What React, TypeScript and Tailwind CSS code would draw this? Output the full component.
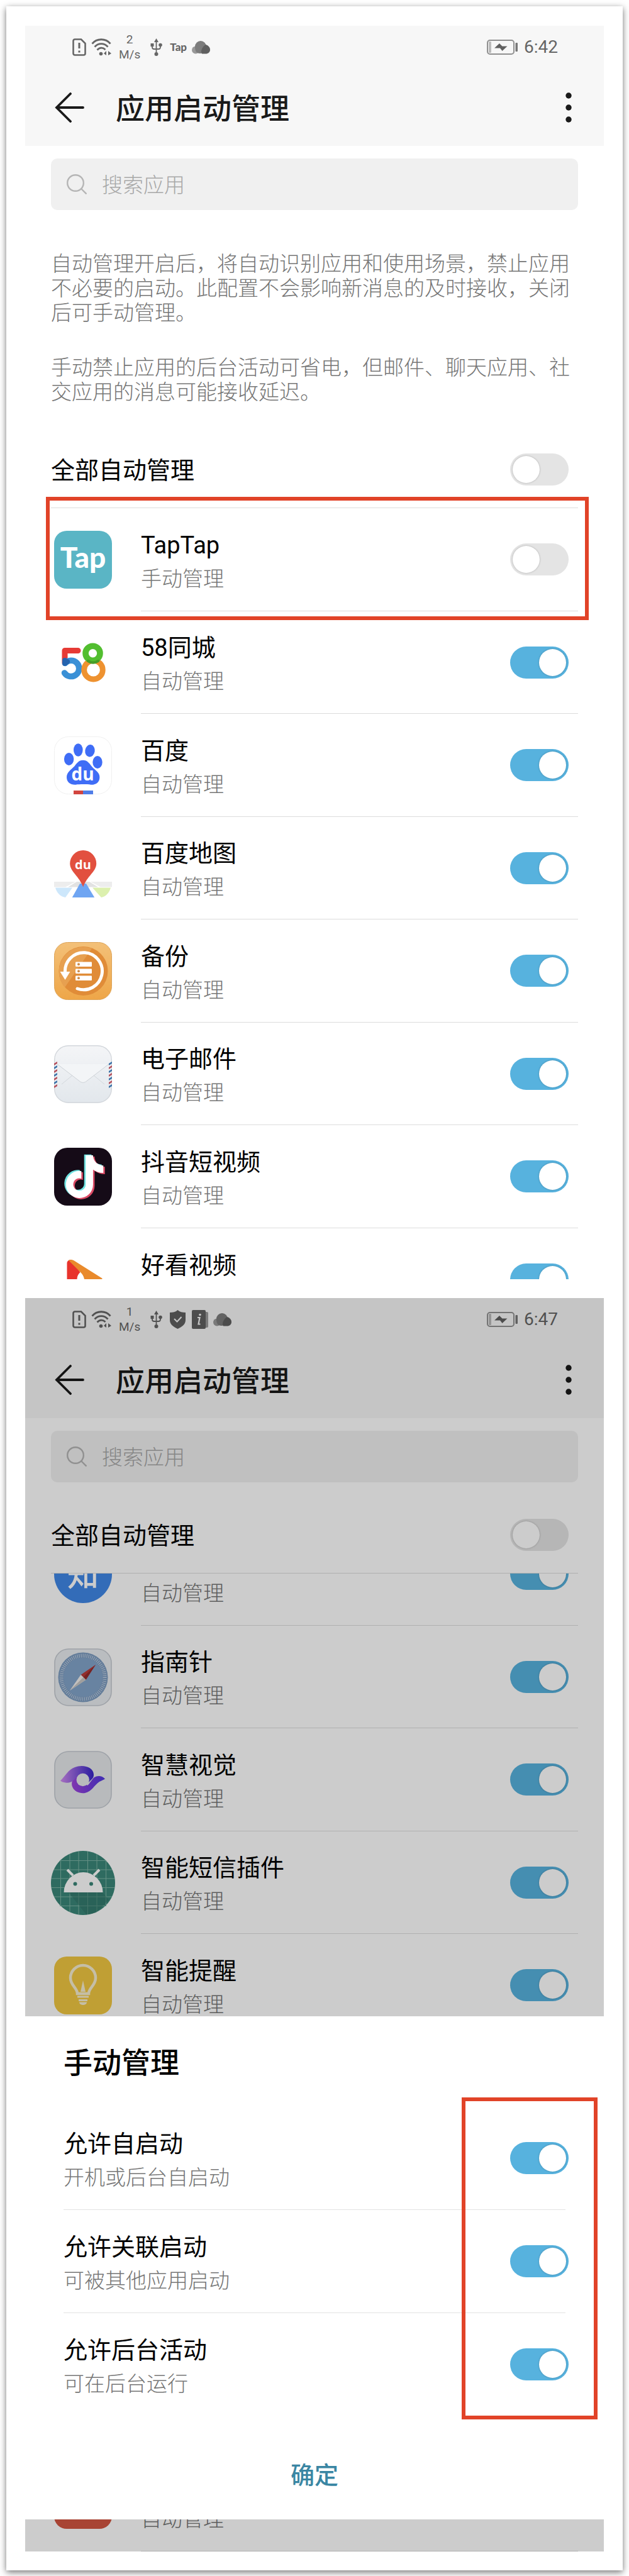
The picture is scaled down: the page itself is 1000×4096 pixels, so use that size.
import { useState } from "react";
import type { ReactNode } from "react";
import { FaTiktok } from "react-icons/fa";

// ---------- status bar icons ----------

const SimIcon = () => (
  <svg width="22" height="28" viewBox="0 0 22 28" fill="none" stroke="#666" strokeWidth="2.6">
    <path d="M4 1.5h10L20.5 8v16a2.5 2.5 0 0 1-2.5 2.5H4A2.5 2.5 0 0 1 1.5 24V4A2.5 2.5 0 0 1 4 1.5z" />
    <path d="M11 7v9M11 19.5v3" strokeWidth="3" />
  </svg>
);

const WifiIcon = () => (
  <svg width="32" height="28" viewBox="0 0 32 28" fill="none" stroke="#666" strokeWidth="2.8">
    <path d="M1.5 8.500C9-.5 23-.5 30.500 8.500" />
    <path d="M5.500 13.500c6-6.500 15-6.500 21 0" />
    <path d="M9.500 18.500c4-4.300 9-4.300 13-.5" />
    <circle cx="15.500" cy="24.500" r="2.800" fill="#666" stroke="none" />
    <path d="M20 24l4-4v7zM27 20l5 4-5 3z" fill="#666" stroke="none" />
  </svg>
);

const UsbIcon = () => (
  <svg width="19" height="28" viewBox="0 0 19 28" fill="none" stroke="#666" strokeWidth="1.8">
    <path d="M9.500 4v20M3 11v3c0 2 1 3 3 3h7c2 0 3-1 3-3v-3" />
    <path d="M9.500 0l3.500 6H6zM.5 8h5v5h-5z" fill="#666" stroke="none" />
    <circle cx="16" cy="10.500" r="2.800" fill="#666" stroke="none" />
    <circle cx="9.500" cy="25" r="3" fill="#666" stroke="none" />
  </svg>
);

const CloudIcon = () => (
  <svg width="29" height="21" viewBox="0 0 29 21">
    <circle cx="6" cy="14.500" r="6" fill="#999" />
    <path d="M5 9a9 9 0 0 1 18 0c0 7-4 11-10 11S5 16 5 9z" fill="#7c7c7c" />
    <path d="M22 6c4 1 7 4 7 8s-3 6.500-7 6.500h-6c-3-4 1-12 6-14.500z" fill="#606060" />
  </svg>
);

const ShieldIcon = () => (
  <svg width="25" height="30" viewBox="0 0 25 30">
    <path d="M12.500 0c3 3 8 4 12.500 4v12c0 7-6 11-12.500 14C6 27 0 23 0 16V4c4.500 0 9.500-1 12.500-4z" fill="#606060" />
    <path d="M7 14l4.500 4.500L18.500 11" fill="none" stroke="#f7f7f7" strokeWidth="2" />
  </svg>
);

const InfoIcon = () => (
  <svg width="26" height="30" viewBox="0 0 26 30">
    <rect x="20" y="3" width="6" height="25" rx="2" fill="#999" />
    <rect width="22" height="30" rx="2" fill="#606060" />
    <path d="M9 12h3.500l-2 10.500h3" fill="none" stroke="#f7f7f7" strokeWidth="2.200" />
    <circle cx="13" cy="7.500" r="1.800" fill="#f7f7f7" />
  </svg>
);

const BatteryIcon = () => (
  <svg width="49" height="24" viewBox="0 0 49 24">
    <rect x="1" y="1" width="42" height="22" rx="4" fill="none" stroke="#909090" strokeWidth="2" />
    <rect x="3" y="3" width="4" height="18" rx="1" fill="#bbb" />
    <rect x="45.500" y="5" width="3.500" height="14" rx="1" fill="#777" />
    <path d="M20 6l4.500 4.500h8l-8 7.500-3.500-4.500h-9z" fill="#606060" />
  </svg>
);

// ---------- app icons ----------

const AppSvg = ({ children }: { children: ReactNode }) => (
  <svg className="size-[92px]" viewBox="0 0 92 92" aria-hidden="true">
    {children}
  </svg>
);

const TapIcon = () => (
  <AppSvg>
    <rect width="92" height="92" rx="20" fill="#5ab5c5" />
    <text x="46" y="58.500" textAnchor="middle" fontSize="46" fontWeight="900" fontFamily="Lato, sans-serif" fill="#fff">Tap</text>
  </AppSvg>
);

const CityIcon = () => (
  <AppSvg>
    <g fill="none" strokeLinecap="round" strokeLinejoin="round">
      <path d="M38 26.500H17V46" stroke="#e63a35" strokeWidth="9" />
      <path d="M17.500 46.500A12.700 12.700 0 1 1 16.500 62" stroke="#3a90d6" strokeWidth="9.500" />
      <path d="M17 42v5l4-3" stroke="#2563ae" strokeWidth="8" />
      <circle cx="62.500" cy="57.200" r="14.800" stroke="#ee9230" strokeWidth="8.800" />
      <circle cx="61.500" cy="30.800" r="11.500" stroke="#52be2f" strokeWidth="9.600" />
      <path d="M54 43a14 14 0 0 0 16 0" stroke="#459c27" strokeWidth="4.500" />
    </g>
  </AppSvg>
);

const BaiduIcon = () => (
  <AppSvg>
    <rect x=".5" y=".5" width="91" height="91" rx="22" fill="#fff" stroke="#f0f0f0" />
    <g fill="#3f6df6">
      <ellipse cx="23.600" cy="36" rx="7.700" ry="10" />
      <ellipse cx="38.300" cy="21.500" rx="7.300" ry="10.300" />
      <ellipse cx="57" cy="22.800" rx="7.700" ry="9.800" transform="rotate(8 57 22.800)" />
      <ellipse cx="69" cy="41" rx="7.700" ry="10" />
      <path d="M46 37.700c7 0 10 5 14 10 5 6 12.400 9 12.400 17 0 9-7 12.500-14 12-6-.8-18-.8-24 0-8 .5-14.400-3.500-14.400-12 0-8 7-12 12-17 4-5 7-10 14-10z" />
    </g>
    <text x="45.500" y="70" textAnchor="middle" fontSize="28" fontWeight="700" fontFamily="Open Sans, sans-serif" fill="#fff">du</text>
    <path d="M31 86h15v6H31z" fill="#d2453f" />
    <path d="M46 86h16v6H46z" fill="#4f7de8" />
  </AppSvg>
);

const MapIcon = () => (
  <AppSvg>
    <path d="M0 67h34l-16 8.500H0zM58 67h34v8.500H74z" fill="#ededed" />
    <path d="M36 67h20l14 8.500H22z" fill="#e2e2e2" />
    <path d="M2 76.500h27L18 92C10 91 4 84 2 76.500z" fill="#cde7fb" />
    <path d="M61 76.500h29C88 84 82 91 75 92z" fill="#dcf0ae" />
    <path d="M41 70h10l13.500 22.500h-36z" fill="#6fa5f2" />
    <path d="M46.200 17a21 21 0 0 1 21 21c0 13-15 20-21 37.500C40 58 25.200 51 25.200 38a21 21 0 0 1 21-21z" fill="#e2503f" />
    <text x="46" y="46.500" textAnchor="middle" fontSize="20" fontWeight="700" fontFamily="Open Sans, sans-serif" fill="#fff">du</text>
  </AppSvg>
);

const BackupIcon = () => (
  <AppSvg>
    <defs>
      <linearGradient id="backupBg" x1="0" y1="0" x2="0" y2="1">
        <stop offset="0" stopColor="#f3c078" />
        <stop offset="1" stopColor="#eea648" />
      </linearGradient>
    </defs>
    <rect x=".5" y=".5" width="91" height="91" rx="21" fill="url(#backupBg)" stroke="#dca358" />
    <circle cx="46.500" cy="46" r="39" fill="#e08c38" />
    <path d="M60 10L17 72A39 39 0 0 1 60 10z" fill="#e7a050" />
    <path d="M17.500 48A29.500 29.500 0 1 1 37 74" fill="none" stroke="#fff" strokeWidth="5" strokeLinecap="round" />
    <path d="M9.500 47H25.500L17.500 60z" fill="#fff" />
    <g fill="#fff">
      <rect x="34" y="31.500" width="26" height="7.500" rx="1" />
      <rect x="34" y="42.500" width="26" height="7.500" rx="1" />
      <rect x="34" y="53.500" width="26" height="7.500" rx="1" />
    </g>
    <g fill="#cf8c48">
      <circle cx="39" cy="35.300" r="2" />
      <circle cx="39" cy="46.300" r="2" />
      <circle cx="39" cy="57.300" r="2" />
    </g>
  </AppSvg>
);

const stripes = [27, 33, 39, 45, 51, 57, 63];

const MailIcon = () => (
  <AppSvg>
    <defs>
      <linearGradient id="mailBg" x1="0" y1="0" x2="0" y2="1">
        <stop offset="0" stopColor="#f4f5f7" />
        <stop offset="1" stopColor="#e2e7ec" />
      </linearGradient>
    </defs>
    <rect x=".7" y=".7" width="90.600" height="90.600" rx="22" fill="url(#mailBg)" stroke="#d3d7dc" strokeWidth="1.400" />
    <path d="M12 62l17-14M80 62L63 48" stroke="#d2d7dc" fill="none" />
    <path d="M5 30l34 26c5 4.500 9 4.500 14 0l34-26" fill="#f3f5f7" stroke="#cdd2d7" />
    {stripes.map((y, i) => (
      <g key={y}>
        <path d={`M0 ${y + 2}l5-3v3l-5 3z`} fill={i % 2 ? "#3b72a8" : "#b5505c"} />
        <path d={`M87 ${y + 2}l5-3v3l-5 3z`} fill={i % 2 ? "#b5505c" : "#3b72a8"} />
      </g>
    ))}
  </AppSvg>
);

const DouyinIcon = () => (
  <AppSvg>
    <rect width="92" height="92" rx="21" fill="#150b17" />
    <FaTiktok x="12" y="10.500" size={68} color="#6fe3e1" />
    <FaTiktok x="17" y="14" size={68} color="#dc4b66" />
    <FaTiktok x="14.500" y="12" size={68} color="#fff" />
  </AppSvg>
);

const HaokanIcon = () => (
  <AppSvg>
    <path d="M20.500 20c0-4 3-6 7-6l14 20c-3 3-5 6-5 11v36h-16z" fill="#e8332c" />
    <path d="M23 15c2-1.500 5-1.500 8 0l46 29-29 22V45c-1-5-3-8-6-11z" fill="#e98a2c" />
  </AppSvg>
);

const ZhihuIcon = () => (
  <AppSvg>
    <circle cx="46" cy="46" r="46" fill="#4088e7" />
    <text x="46" y="65" textAnchor="middle" fontSize="50" fontWeight="500" fontFamily="Noto Sans CJK SC, sans-serif" fill="#fff">知</text>
  </AppSvg>
);

const CompassIcon = () => (
  <AppSvg>
    <rect x="1" y="1" width="90" height="90" rx="22" fill="#e9edf0" stroke="#c6cbd2" strokeWidth="1.600" />
    <circle cx="46" cy="46" r="39.500" fill="#7c9cc0" />
    <circle cx="46" cy="46" r="34.500" fill="none" stroke="#c3d2e4" strokeWidth="6" strokeDasharray="1 2" />
    <circle cx="46" cy="46" r="31" fill="#83a4ca" />
    <path d="M66 26L42.500 42l8 8z" fill="#b83a38" />
    <path d="M66 26L46.500 46l4 4z" fill="#932c2c" />
    <path d="M25 67l17.500-25 8 8z" fill="#f3f1ee" />
    <path d="M25 67l21.500-21 4 4z" fill="#c9c7c5" />
  </AppSvg>
);

const VisionIcon = () => (
  <AppSvg>
    <defs>
      <linearGradient id="visionTop" x1="0" y1="0" x2="1" y2="0">
        <stop offset="0" stopColor="#d08bf0" />
        <stop offset="1" stopColor="#3524c8" />
      </linearGradient>
      <linearGradient id="visionBottom" x1="0" y1="0" x2="1" y2="0">
        <stop offset="0" stopColor="#a044dc" />
        <stop offset="1" stopColor="#5038e0" />
      </linearGradient>
    </defs>
    <rect x="1" y="1" width="90" height="90" rx="22" fill="#e6e9eb" stroke="#c6cbd2" strokeWidth="1.600" />
    <path d="M37 38C28 44 27 52 29 57c3 8 12 11 20 10 11-2 15-13 23-18 4-2 7-3 9-4.500C76 39 69 39 64 42c-4 3-7 10-11 13z" fill="url(#visionBottom)" />
    <path d="M10 47.500C18 40 22 30 33 26c12-5 30-1 30 12 0 3-1 5-3 7l-5 5-17-11C32 46 28 52 18 50.600c-4-.6-6-1.600-8-3.100z" fill="url(#visionTop)" />
    <circle cx="45.700" cy="46" r="10.200" fill="#e6e9eb" />
  </AppSvg>
);

// this one is a bit wider than the others
const AndroidIcon = () => (
  <svg className="-mx-[5px] size-[102px]" viewBox="0 0 102 102" aria-hidden="true">
    <circle cx="51" cy="51" r="51" fill="#3a8678" />
    <path
      d="M15.500 14v74M30 5v92M44 1v100M58.500 1v100M73 5v92M87.500 15v72M14 15.500h74M5 30h92M1 44h100M1 58.500h100M5 73h92M14 87.500h74"
      stroke="#7fb5a5"
      strokeWidth="1"
    />
    <path d="M28 66h54l10 12-20 20a51 51 0 0 1-16 3z" fill="#2d6f64" opacity=".5" />
    <path d="M20.500 66a31 32 0 0 1 62 0z" fill="#fff" />
    <path d="M26 30l9 9M77 30l-9 9" stroke="#fff" strokeWidth="4" />
    <circle cx="38.500" cy="52.500" r="3" fill="#3a8678" />
    <circle cx="64" cy="52.500" r="3" fill="#3a8678" />
  </svg>
);

const BulbIcon = () => (
  <AppSvg>
    <rect width="92" height="92" rx="20" fill="#f0c741" />
    <path d="M37 59c0-9-11-13-11-25a20 20 0 0 1 40 0c0 12-11 16-11 25z" fill="none" stroke="#f7eed0" strokeWidth="4.500" />
    <path d="M46 38l4 18h-8z" fill="#f7eed0" />
    <path d="M37 64h18M39 69.500h14" stroke="#f7eed0" strokeWidth="3" />
    <path d="M40 72.500h12c0 6-12 6-12 0z" fill="#f7eed0" />
  </AppSvg>
);

const RedIcon = () => (
  <AppSvg>
    <rect width="92" height="92" rx="20" fill="#d25642" />
  </AppSvg>
);

// ---------- shared pieces ----------

type ToggleProps = { label: string; defaultOn?: boolean; className?: string };

function Toggle({ label, defaultOn = false, className = "" }: ToggleProps) {
  const [on, setOn] = useState(defaultOn);
  return (
    <input
      type="checkbox"
      role="switch"
      aria-label={label}
      checked={on}
      onChange={(e) => setOn(e.target.checked)}
      className={`flex h-[51px] w-[93px] shrink-0 appearance-none rounded-full bg-[#e4e4e4] p-1 before:size-[43px] before:rounded-full before:bg-white before:shadow-[0_0_3px_rgba(0,0,0,0.25)] checked:justify-end checked:bg-[#57b2de] ${className}`}
    />
  );
}

type App = { icon: ReactNode; name?: string; manual?: boolean; marked?: boolean };

function AppRow({ app }: { app: App }) {
  return (
    <li className="relative flex h-[164px] items-center pl-[5px] even:h-[163px]">
      {app.icon}
      <div className="ml-[46px] flex h-full flex-1 items-center justify-between border-b border-[#dcdcdc] pr-[15px]">
        <div className="pt-2">
          <p className="h-[54px] text-[38px] leading-[54px] text-black">{app.name}</p>
          <p className="text-[33px] leading-[54px] font-light text-[#767676]">
            {app.manual ? "手动管理" : "自动管理"}
          </p>
        </div>
        <Toggle label={app.name ?? "自动管理"} defaultOn={!app.manual} />
      </div>
      {app.marked && (
        <div className="pointer-events-none absolute -top-[18px] -right-[17px] -bottom-[14px] -left-[8px] border-[6px] border-[#e14328]" />
      )}
    </li>
  );
}

type HeaderProps = { speed: string; time: string; notices: ReactNode };

function Header({ speed, time, notices }: HeaderProps) {
  return (
    <header className="bg-[#f7f7f7]">
      <div className="flex h-[68px] items-center justify-between pr-[73px] pl-[75px] text-[#666]">
        <div className="flex items-center">
          <SimIcon />
          <div className="ml-2"><WifiIcon /></div>
          <div className="ml-3 text-center text-[19px] leading-6">
            <p>{speed}</p>
            <p>M/s</p>
          </div>
          <div className="ml-4"><UsbIcon /></div>
          {notices}
          <div className="ml-2"><CloudIcon /></div>
        </div>
        <div className="flex items-center gap-[10px]">
          <BatteryIcon />
          <span className="text-[28px]">{time}</span>
        </div>
      </div>
      <div className="flex h-[123px] items-center pr-[51px] pl-[47px]">
        <button type="button" aria-label="返回">
          <svg width="47" height="48" viewBox="0 0 47 48" fill="none" stroke="#1a1a1a" strokeWidth="3.800" strokeLinecap="round">
            <path d="M25 2L3 24l22 22M3 24h42" />
          </svg>
        </button>
        <h1 className="ml-[50px] flex-1 pt-1 text-[46px] leading-[60px] font-medium text-[#1a1a1a]">应用启动管理</h1>
        <button type="button" aria-label="更多">
          <svg width="10" height="48" viewBox="0 0 10 48" fill="#1a1a1a">
            <circle cx="5" cy="5" r="4.700" />
            <circle cx="5" cy="24" r="4.700" />
            <circle cx="5" cy="43" r="4.700" />
          </svg>
        </button>
      </div>
    </header>
  );
}

function SearchBox() {
  return (
    <label className="mt-5 flex h-[82px] items-center rounded-[10px] bg-[#f0f0f0] pl-[25px]">
      <svg width="32" height="32" viewBox="0 0 32 32" fill="none" stroke="#b5b5b5" strokeWidth="2.400">
        <circle cx="14" cy="14" r="12.800" />
        <path d="M23 23l8.500 8.500" />
      </svg>
      <input
        type="search"
        aria-label="搜索应用"
        placeholder="搜索应用"
        className="ml-6 min-w-0 flex-1 bg-transparent pt-1 text-[33px] font-light outline-none placeholder:text-[#a8a8a8]"
      />
    </label>
  );
}

function AllRow() {
  return (
    <div className="flex h-[122px] items-center justify-between border-b border-[#dcdcdc] pr-[15px]">
      <span className="pt-1 text-[38px] text-black">全部自动管理</span>
      <Toggle label="全部自动管理" />
    </div>
  );
}

// ---------- data ----------

const firstApps: App[] = [
  { name: "TapTap", icon: <TapIcon />, manual: true, marked: true },
  { name: "58同城", icon: <CityIcon /> },
  { name: "百度", icon: <BaiduIcon /> },
  { name: "百度地图", icon: <MapIcon /> },
  { name: "备份", icon: <BackupIcon /> },
  { name: "电子邮件", icon: <MailIcon /> },
  { name: "抖音短视频", icon: <DouyinIcon /> },
];

const lastApps: App[] = [
  { icon: <ZhihuIcon /> },
  { name: "指南针", icon: <CompassIcon /> },
  { name: "智慧视觉", icon: <VisionIcon /> },
  { name: "智能短信插件", icon: <AndroidIcon /> },
  { name: "智能提醒", icon: <BulbIcon /> },
];

const options = [
  { title: "允许自启动", hint: "开机或后台自启动" },
  { title: "允许关联启动", hint: "可被其他应用启动" },
  { title: "允许后台活动", hint: "可在后台运行" },
];

function ManualSheet() {
  return (
    <section className="relative z-10 bg-white px-[61px]">
      <h2 className="flex h-[144px] items-center pt-1 text-[46px] font-medium text-black">手动管理</h2>
      <div className="relative">
        <ul>
          {options.map((o) => (
            <li key={o.title} className="flex h-[164px] items-center justify-between border-b border-[#e2e2e2] last:border-transparent">
              <div className="pt-2">
                <p className="text-[38px] leading-[54px] text-black">{o.title}</p>
                <p className="text-[33px] leading-[54px] font-light text-[#767676]">{o.hint}</p>
              </div>
              <Toggle label={o.title} defaultOn className="-mr-[5px]" />
            </li>
          ))}
        </ul>
        <div className="pointer-events-none absolute -top-[15px] -right-[51px] -bottom-[5px] w-[216px] border-[6px] border-[#e14328]" />
      </div>
      <button type="button" className="mt-[25px] h-[139px] w-full text-[38px] font-medium text-[#3a86a3]">
        确定
      </button>
    </section>
  );
}

export default function App() {
  return (
    <div className="bg-white p-[10px] font-[Roboto,'Noto_Sans_CJK_SC',sans-serif]" lang="zh-CN">
      <main className="flex flex-col gap-[30px] bg-white px-[30px] pt-[31px] pb-[30px] shadow-[0_3px_10px_rgba(0,0,0,0.55)]">
        <section>
          <Header
            speed="2"
            time="6:42"
            notices={<span className="ml-3 font-[Lato] text-[17px] font-black">Tap</span>}
          />
          <div className="px-[41px]">
            <SearchBox />
            <div className="mt-[66px] space-y-12 text-[33px] leading-[39px] font-light text-[#767676]">
              <p>自动管理开启后，将自动识别应用和使用场景，禁止应用不必要的启动。此配置不会影响新消息的及时接收，关闭后可手动管理。</p>
              <p>手动禁止应用的后台活动可省电，但邮件、聊天应用、社交应用的消息可能接收延迟。</p>
            </div>
            <div className="mt-[43px]">
              <AllRow />
            </div>
            <ul>
              {firstApps.map((app) => (
                <AppRow key={app.name} app={app} />
              ))}
            </ul>
            {/* last row is cut by the screen edge */}
            <ul className="h-[81px] overflow-hidden">
              <AppRow app={{ name: "好看视频", icon: <HaokanIcon /> }} />
            </ul>
          </div>
        </section>

        <section className="relative bg-white">
          <Header
            speed="1"
            time="6:47"
            notices={
              <div className="ml-3 flex gap-[10px]">
                <ShieldIcon />
                <InfoIcon />
              </div>
            }
          />
          <div className="px-[41px]">
            <SearchBox />
            <div className="mt-[23px]">
              <AllRow />
            </div>
            <div className="h-[704px] overflow-hidden">
              <ul className="-mt-[81px]">
                {lastApps.map((app, i) => (
                  <AppRow key={i} app={app} />
                ))}
              </ul>
            </div>
          </div>
          <ManualSheet />
          <div className="flex h-[51px] flex-col justify-end overflow-hidden px-[41px]">
            <ul>
              <AppRow app={{ icon: <RedIcon /> }} />
            </ul>
          </div>
          <div className="pointer-events-none absolute inset-0 bg-black/20" />
        </section>
      </main>
    </div>
  );
}
